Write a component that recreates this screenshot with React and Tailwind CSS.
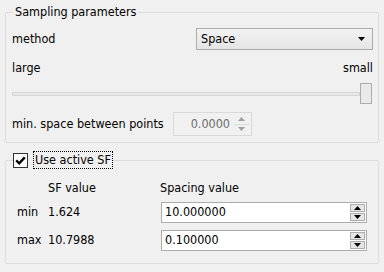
import React from 'react'

const font = { fontFamily: '"DejaVu Sans Condensed", "DejaVu Sans", Tahoma, sans-serif' }

// Up/down arrow pair used by the Qt-style spin boxes.
function SpinArrows({ disabled }) {
  const tri = disabled ? 'fill-[#a0a0a0]' : 'fill-black'
  return (
    <div className={`flex h-full w-[15px] flex-col ${disabled ? '' : 'gap-[1px]'}`}>
      <div className={`flex flex-1 items-center justify-center ${disabled ? 'bg-[#f0f0f0]' : 'border border-[#adadad] bg-[#e6e6e6]'}`}>
        <svg width="7" height="4" viewBox="0 0 7 4"><path d="M0 4 L3.5 0 L7 4 Z" className={tri} /></svg>
      </div>
      <div className={`flex flex-1 items-center justify-center ${disabled ? 'bg-[#f0f0f0] border-t border-[#dcdcdc]' : 'border border-[#adadad] bg-[#e6e6e6]'}`}>
        <svg width="7" height="4" viewBox="0 0 7 4"><path d="M0 0 L7 0 L3.5 4 Z" className={tri} /></svg>
      </div>
    </div>
  )
}

function SpinBox({ value }) {
  return (
    <div className="flex h-[21px] w-[206px] items-center border border-[#acacac] bg-white pl-[3px] pr-[1px] py-[1px]">
      <span className="flex-1 leading-none">{value}</span>
      <SpinArrows />
    </div>
  )
}

export default function App() {
  return (
    <div style={font} className="h-[272px] w-[384px] overflow-hidden bg-[#f0f0f0] text-[12.5px] text-[#000]">
      <fieldset className="ml-[5px] mt-[5px] h-[138px] w-[374px] rounded-[2px] border border-[#dcdcdc]">
        <legend className="ml-[7px] px-[2px] leading-[14px]">Sampling parameters</legend>

        <div className="pl-[6px] pr-[5px]">
          <div className="mt-[9px] flex h-[22px] items-center">
            <span>method</span>
            <div className="ml-auto flex h-[22px] w-[177px] items-center border border-[#acacac] bg-gradient-to-b from-[#f2f2f2] to-[#e5e5e5] pl-[4px] pr-[7px]">
              <span className="flex-1">Space</span>
              <svg width="7" height="4" viewBox="0 0 7 4"><path d="M0 0 L7 0 L3.5 4 Z" fill="#000" /></svg>
            </div>
          </div>

          <div className="mt-[10px] flex h-[16px] items-center justify-between">
            <span>large</span>
            <span>small</span>
          </div>

          <div className="mt-[7px] flex h-[21px] items-center">
            <div className="h-[4px] flex-1 border border-[#d6d6d6] bg-[#e7e7e7]" />
            <div className="h-[21px] w-[12px] border border-[#acacac] bg-[#e9e9e9]" />
            <div className="w-[1px]" />
          </div>

          <div className="mt-[8px] flex h-[24px] items-center">
            <span className="w-[161px]">min. space between points</span>
            <div className="flex h-[24px] w-[79px] items-center border border-[#d9d9d9] bg-[#f0f0f0] py-[2px] pr-[2px]">
              <span className="flex-1 pr-[4px] text-right text-[#6d6d6d]">0.0000</span>
              <SpinArrows disabled />
            </div>
          </div>
        </div>
      </fieldset>

      <fieldset className="ml-[5px] mt-[8px] h-[113px] w-[374px] rounded-[2px] border border-[#dcdcdc]">
        <legend className="ml-[7px] flex h-[18px] items-center">
          <span className="flex h-[15px] w-[15px] items-center justify-center border border-[#333333] bg-white">
            <svg width="11" height="9" viewBox="0 0 11 9">
              <path d="M1.2 4.4 L4.2 7.3 L9.8 1.4" fill="none" stroke="#000" strokeWidth="2.4" />
            </svg>
          </span>
          <span className="ml-[5px] flex h-[18px] items-center border border-dotted border-[#000] px-[1px]">Use active SF</span>
        </legend>

        <div className="pl-[11px]">
          <div className="mt-[10px] grid h-[16px] grid-cols-[31px_112px_1fr] items-center">
            <span />
            <span>SF value</span>
            <span>Spacing value</span>
          </div>

          <div className="mt-[7px] grid h-[21px] grid-cols-[31px_113px_1fr] items-center">
            <span>min</span>
            <span>1.624</span>
            <SpinBox value="10.000000" />
          </div>

          <div className="mt-[7px] grid h-[21px] grid-cols-[31px_113px_1fr] items-center">
            <span>max</span>
            <span>10.7988</span>
            <SpinBox value="0.100000" />
          </div>
        </div>
      </fieldset>
    </div>
  )
}
